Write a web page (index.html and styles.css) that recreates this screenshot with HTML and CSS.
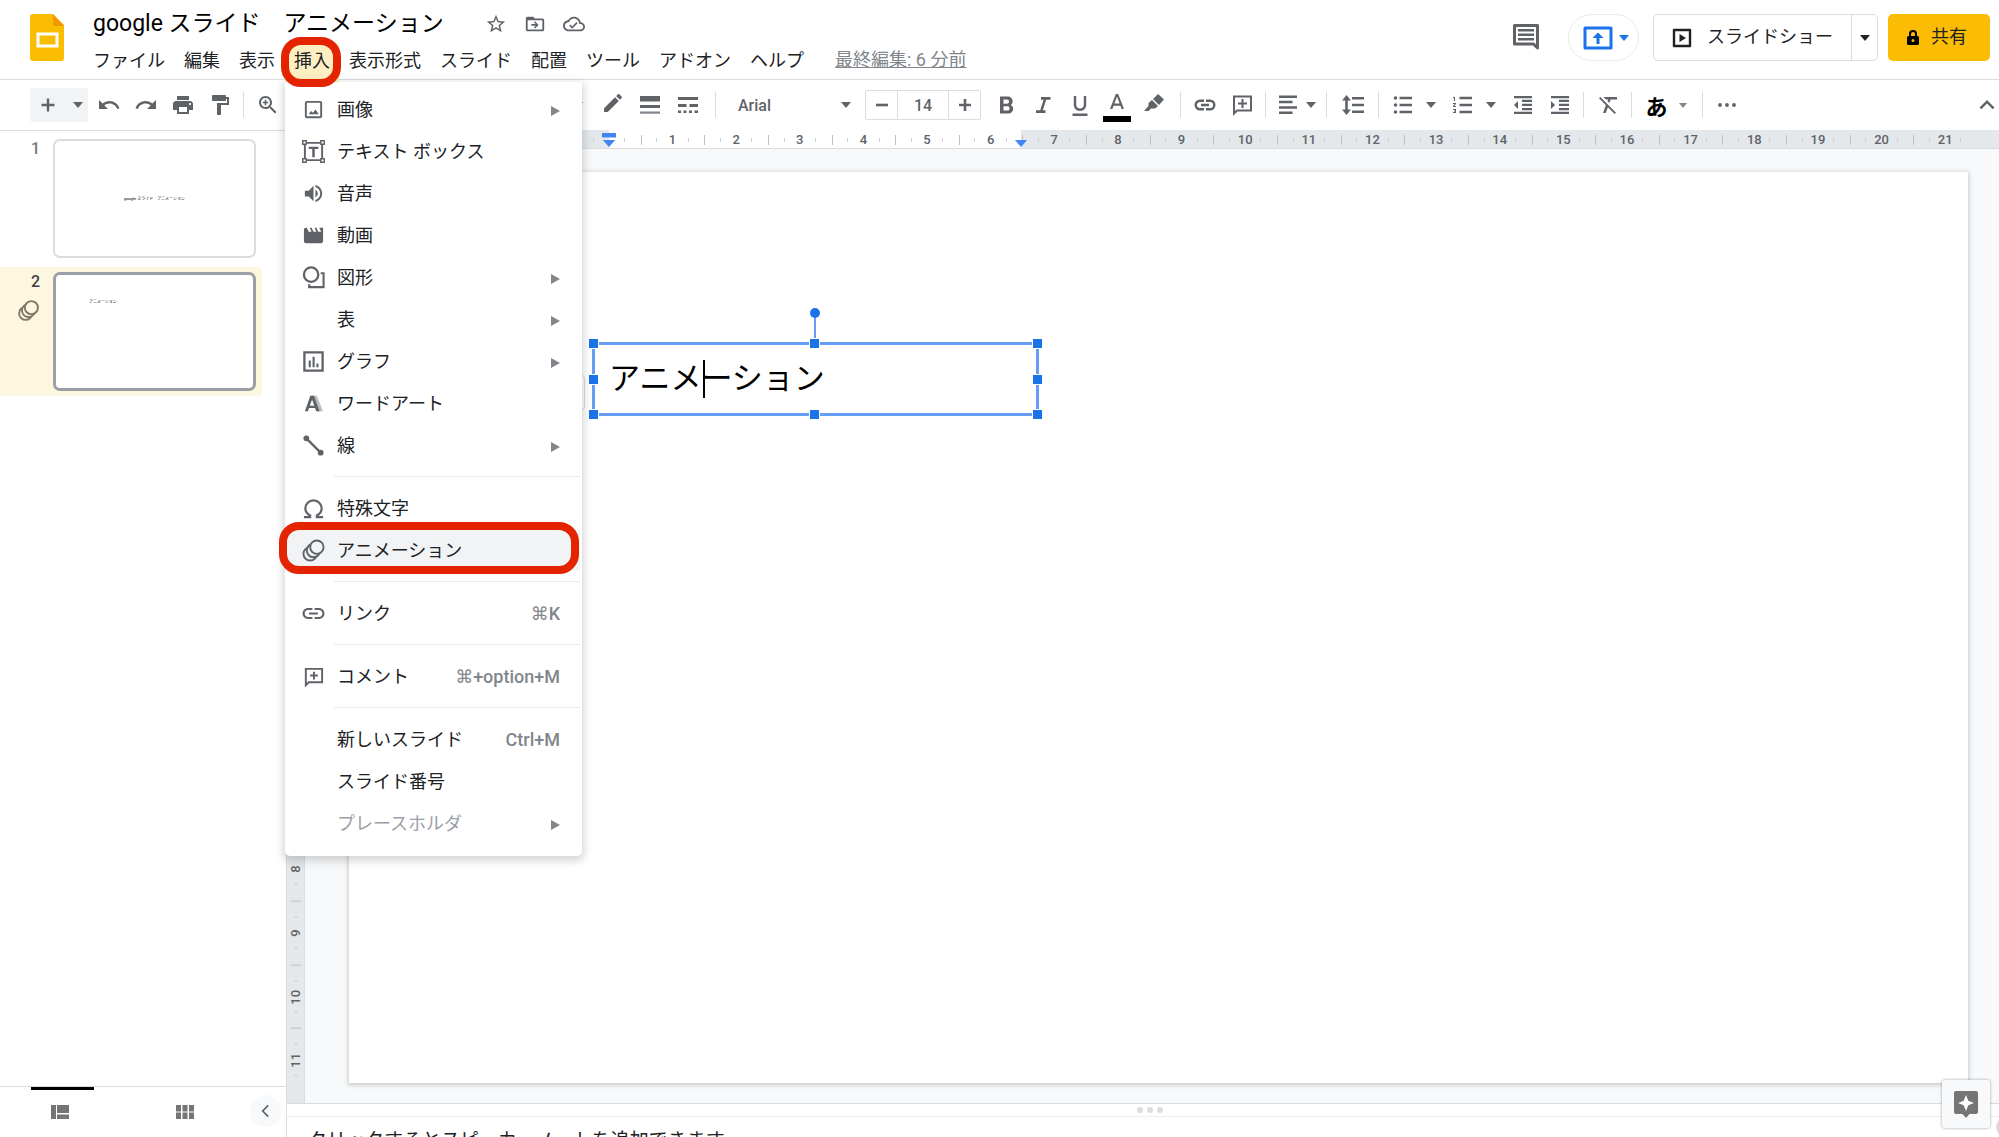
FILE: index.html
```html
<!DOCTYPE html>
<html lang="ja">
<head>
<meta charset="utf-8">
<title>google スライド　アニメーション</title>
<meta name="viewport" content="width=device-width, initial-scale=1">
<link rel="stylesheet" href="styles.css">
</head>
<body>
<div class="app">
  <header class="header">
    <svg class="logo" viewBox="0 0 34 47" aria-hidden="true"><path fill="#fbbc04" d="M3 0h20l11 11v33a3 3 0 0 1-3 3H3a3 3 0 0 1-3-3V3a3 3 0 0 1 3-3z"/><path fill="#f29900" d="M23 0l11 12H23z"/><path fill="none" stroke="#fff" stroke-width="3" d="M8 20h19v12H8z"/></svg>
    <div class="heading">
      <div class="title-row">
        <h1 class="title">google スライド　アニメーション</h1>
        <button class="title-icon" aria-label="スター"><svg viewBox="0 0 24 24"><path d="M22 9.24l-7.19-.62L12 2 9.19 8.63 2 9.24l5.46 4.73L5.82 21 12 17.27 18.18 21l-1.63-7.03L22 9.24zM12 15.4l-3.76 2.27 1-4.28-3.32-2.88 4.38-.38L12 6.1l1.71 4.04 4.38.38-3.32 2.88 1 4.28L12 15.4z"/></svg></button>
        <button class="title-icon" aria-label="移動"><svg viewBox="0 0 24 24"><path d="M20 6h-8l-2-2H4c-1.1 0-2 .9-2 2v12c0 1.1.9 2 2 2h16c1.1 0 2-.9 2-2V8c0-1.1-.9-2-2-2zm0 12H4V8h16v10zm-8-1l4-4-4-4-1.2 1.2 1.9 1.9H8v1.8h4.7l-1.9 1.9z"/></svg></button>
        <button class="title-icon" aria-label="ドキュメントのステータス"><svg viewBox="0 0 24 24"><path d="M19.35 10.04C18.67 6.59 15.64 4 12 4 9.11 4 6.6 5.64 5.35 8.04 2.34 8.36 0 10.91 0 14c0 3.31 2.69 6 6 6h13c2.76 0 5-2.24 5-5 0-2.64-2.05-4.78-4.65-4.96zM19 18H6c-2.21 0-4-1.79-4-4 0-2.05 1.53-3.76 3.56-3.97l1.07-.11.5-.95C8.08 7.14 9.94 6 12 6c2.62 0 4.88 1.86 5.39 4.43l.3 1.5 1.53.11C20.78 12.14 22 13.45 22 15c0 1.65-1.35 3-3 3zm-9-3.4L8 12.6l-1.3 1.3 3.3 3.3 6-6-1.3-1.3z"/></svg></button>
      </div>
      <nav class="menubar">
        <button>ファイル</button>
        <button>編集</button>
        <button>表示</button>
        <div class="menu-anchor">
          <button class="open" aria-expanded="true">挿入</button>
          <span class="callout callout-tab"></span>
          <div class="menu" role="menu">
            <button class="item"><svg viewBox="0 0 24 24"><path d="M19 5v14H5V5h14m0-2H5c-1.1 0-2 .9-2 2v14c0 1.100.9 2 2 2h14c1.100 0 2-.9 2-2V5c0-1.100-.9-2-2-2zM7 17l2.500-3.500 2 2 2.500-3.500 3.500 5z"/></svg><span>画像</span><i class="sub"></i></button>
            <button class="item"><svg viewBox="0 0 24 24"><path fill="none" stroke="#5f6368" stroke-width="2" d="M3 3h18v18H3z"/><path fill="#fff" stroke="#5f6368" stroke-width="1.500" d="M.8 .8h3.600v3.600H.8zM19.600.8h3.600v3.600h-3.600zM.8 19.600h3.600v3.600H.8zM19.600 19.600h3.600v3.600h-3.600z"/><path d="M7 7h10v2.500h-3.700V18h-2.600V9.500H7z"/></svg><span>テキスト ボックス</span></button>
            <button class="item"><svg viewBox="0 0 24 24"><path d="M3 9v6h4l5 5V4L7 9H3zm13.500 3c0-1.770-1.020-3.290-2.500-4.030v8.050c1.480-.73 2.500-2.250 2.500-4.020zM14 3.230v2.060c2.890.86 5 3.540 5 6.710s-2.110 5.850-5 6.710v2.060c4.010-.91 7-4.490 7-8.770s-2.990-7.860-7-8.770z"/></svg><span>音声</span></button>
            <button class="item"><svg viewBox="0 0 24 24"><path d="M18 4l2 4h-3l-2-4h-2l2 4h-3l-2-4H8l2 4H7L5 4H4c-1.100 0-1.990.9-1.990 2L2 18c0 1.100.9 2 2 2h16c1.100 0 2-.9 2-2V4h-4z"/></svg><span>動画</span></button>
            <button class="item"><svg viewBox="0 0 24 24"><path fill="none" stroke="#5f6368" stroke-width="2.200" d="M19.500 7.500H22.500V22H7.500v-3"/><circle cx="9.500" cy="9" r="7.500" fill="none" stroke="#5f6368" stroke-width="2.400"/></svg><span>図形</span><i class="sub"></i></button>
            <button class="item"><svg viewBox="0 0 24 24"></svg><span>表</span><i class="sub"></i></button>
            <button class="item"><svg viewBox="0 0 24 24"><path fill="none" stroke="#5f6368" stroke-width="2.400" d="M2.500 2.500h19v19h-19z"/><path d="M7 11h2.200v7H7zM11 7h2.200v11H11zM15 14h2.200v4H15z"/></svg><span>グラフ</span><i class="sub"></i></button>
            <button class="item"><svg viewBox="0 0 24 24"><path fill="#bdc1c6" d="M12 4h3.500L22 20h-6z"/><path fill="#9aa0a6" d="M10 4h3l6 16h-4z"/><path fill-rule="evenodd" d="M8.700 4h3.600L18 20h-3.200l-1.100-3.200H7.300L6.200 20H3zm1.800 3.700L8.200 14.300h4.600z"/></svg><span>ワードアート</span></button>
            <button class="item"><svg viewBox="0 0 24 24"><path stroke="#5f6368" stroke-width="2.400" d="M4.500 4.500l15 15"/><circle cx="4.500" cy="4.500" r="3"/><circle cx="19.500" cy="19.500" r="3"/></svg><span>線</span><i class="sub"></i></button>
            <hr>
            <button class="item"><svg viewBox="0 0 24 24"><path fill="none" stroke="#5f6368" stroke-width="2.300" d="M2 21h6.500v-1.800C5 17.500 3.500 15 3.500 12a8.500 8.500 0 0 1 17 0c0 3-1.500 5.500-5 7.200V21H22"/></svg><span>特殊文字</span></button>
            <div class="menu-anchor">
              <button class="item hover"><svg viewBox="0 0 24 24"><g fill="#f1f3f4" stroke="#5f6368" stroke-width="2"><circle cx="8.500" cy="15.500" r="7"/><circle cx="12" cy="12" r="7"/><circle cx="15.500" cy="8.500" r="7"/></g></svg><span>アニメーション</span></button>
              <span class="callout callout-row"></span>
            </div>
            <hr>
            <button class="item"><svg viewBox="1.500 1.500 21 21"><path d="M3.900 12c0-1.710 1.390-3.100 3.100-3.100h4V7H7c-2.760 0-5 2.240-5 5s2.240 5 5 5h4v-1.900H7c-1.710 0-3.100-1.390-3.100-3.100zM8 13h8v-2H8v2zm9-6h-4v1.900h4c1.710 0 3.100 1.390 3.100 3.100s-1.390 3.100-3.100 3.100h-4V17h4c2.760 0 5-2.240 5-5s-2.240-5-5-5z"/></svg><span>リンク</span><kbd>⌘K</kbd></button>
            <hr>
            <button class="item"><svg viewBox="0 0 24 24"><path fill="none" stroke="#5f6368" stroke-width="2" d="M4 4h17v14H7l-3 3z"/><path d="M11.500 7h2v3h3v2h-3v3h-2v-3h-3v-2h3z"/></svg><span>コメント</span><kbd>⌘+option+M</kbd></button>
            <hr>
            <button class="item"><svg viewBox="0 0 24 24"></svg><span>新しいスライド</span><kbd>Ctrl+M</kbd></button>
            <button class="item"><svg viewBox="0 0 24 24"></svg><span>スライド番号</span></button>
            <button class="item" disabled><svg viewBox="0 0 24 24"></svg><span>プレースホルダ</span><i class="sub"></i></button>
          </div>
        </div>
        <button>表示形式</button>
        <button>スライド</button>
        <button>配置</button>
        <button>ツール</button>
        <button>アドオン</button>
        <button>ヘルプ</button>
        <a class="last-edit" href="#">最終編集: 6 分前</a>
      </nav>
    </div>
    <div class="actions">
      <button class="comments" aria-label="コメント履歴"><svg viewBox="0 0 28 28"><path fill="none" stroke="#5f6368" stroke-width="3" stroke-linejoin="round" d="M2.500 2.500h23V25l-4-4h-19z"/><path d="M6 6h16v2.500H6zM6 10.500h16V13H6zM6 15h16v2.500H6z"/></svg></button>
      <button class="present" aria-label="会議で画面を共有"><svg viewBox="0 0 30 24"><path fill="none" stroke="#1a73e8" stroke-width="3" stroke-linejoin="round" d="M2 2h26v20H2z"/><path fill="#1a73e8" d="M15 6.500l5.500 5.500h-4v6h-3v-6h-4z"/></svg><i class="caret"></i></button>
      <div class="show">
        <button class="show-main"><svg viewBox="0 0 20 20"><path fill="none" stroke="#202124" stroke-width="2.400" stroke-linejoin="round" d="M2 2h16v16H2z"/><path fill="#202124" d="M7.500 6l6.500 4-6.500 4z"/></svg><span>スライドショー</span></button>
        <button class="show-more" aria-label="その他"><i class="caret"></i></button>
      </div>
      <button class="share"><svg viewBox="0 0 14 16"><path fill="#000" fill-rule="evenodd" d="M3 6V4a4 4 0 0 1 8 0v2h.5A1.500 1.500 0 0 1 13 7.500v6a1.500 1.500 0 0 1-1.500 1.500h-9A1.500 1.500 0 0 1 1 13.500v-6A1.500 1.500 0 0 1 2.500 6zm2 0h4V4a2 2 0 0 0-4 0zm2 3a1.500 1.500 0 1 0 0 3 1.500 1.500 0 0 0 0-3z"/></svg><span>共有</span></button>
    </div>
  </header>

  <div class="toolbar" role="toolbar">
    <button class="new" aria-label="新しいスライド"><svg viewBox="0 0 24 24"><path d="M18.500 13.200h-5.300v5.300h-2.400v-5.300H5.500v-2.400h5.300V5.500h2.400v5.300h5.300z"/></svg><i class="caret"></i></button>
    <button class="tool" aria-label="元に戻す"><svg viewBox="0 0 24 24"><path d="M12.500 8c-2.650 0-5.050.99-6.900 2.600L2 7v9h9l-3.620-3.620c1.390-1.160 3.160-1.880 5.120-1.880 3.540 0 6.550 2.310 7.600 5.500l2.370-.78C21.080 11.030 17.150 8 12.500 8z"/></svg></button>
    <button class="tool" aria-label="やり直し"><svg viewBox="0 0 24 24"><path d="M18.400 10.600C16.550 8.990 14.150 8 11.500 8c-4.650 0-8.580 3.030-9.960 7.220L3.900 16c1.050-3.190 4.050-5.500 7.600-5.500 1.950 0 3.730.72 5.120 1.880L13 16h9V7l-3.600 3.600z"/></svg></button>
    <button class="tool" aria-label="印刷"><svg viewBox="0 0 24 24"><path d="M19 8H5c-1.660 0-3 1.340-3 3v6h4v4h12v-4h4v-6c0-1.660-1.340-3-3-3zm-3 11H8v-5h8v5zm3-7c-.55 0-1-.45-1-1s.45-1 1-1 1 .45 1 1-.45 1-1 1zm-1-9H6v4h12V3z"/></svg></button>
    <button class="tool" aria-label="書式を貼り付け"><svg viewBox="0 0 24 24"><path d="M18 4V3c0-.55-.45-1-1-1H5c-.55 0-1 .45-1 1v4c0 .55.45 1 1 1h12c.55 0 1-.45 1-1V6h1v4H9v11c0 .55.45 1 1 1h2c.55 0 1-.45 1-1v-9h8V4h-3z"/></svg></button>
    <i class="divider"></i>
    <button class="tool" aria-label="ズーム"><svg viewBox="0 0 24 24"><path d="M15.500 14h-.79l-.28-.27C15.410 12.590 16 11.110 16 9.500 16 5.910 13.090 3 9.500 3S3 5.910 3 9.500 5.910 16 9.500 16c1.610 0 3.090-.59 4.230-1.570l.27.28v.79l5 4.990L20.490 19l-4.990-5zm-6 0C7.010 14 5 11.990 5 9.500S7.010 5 9.500 5 14 7.010 14 9.500 11.990 14 9.500 14zm.8-7.200H8.700v1.900H6.800v1.600h1.900v1.900h1.600v-1.900h1.900V8.700h-1.900z"/></svg></button>
    <button class="tool line-tool" aria-label="線"><i class="caret"></i></button>
    <button class="tool stroke" aria-label="枠線の色"><svg viewBox="0 0 24 24"><path d="M3 17.250V21h3.750L17.810 9.940l-3.750-3.750L3 17.250zM20.710 7.040c.39-.39.39-1.020 0-1.410l-2.340-2.340c-.39-.39-1.020-.39-1.410 0l-1.830 1.830 3.750 3.750 1.830-1.830z" transform="translate(1 -2)"/></svg></button>
    <button class="tool stroke" aria-label="枠線の太さ"><svg viewBox="0 0 24 24"><path d="M2 3h20v5.500H2zM2 12h20v3H2z"/><path fill="#80868b" d="M2 18.500h20v2.200H2z"/></svg></button>
    <button class="tool stroke" aria-label="枠線（破線）"><svg viewBox="0 0 24 24"><path d="M2 4h20v3H2zM2 11h8.500v3H2zM13.500 11H22v3h-8.500zM2 17.500h3V20H2zM7.500 17.500h3V20h-3zM13 17.500h3V20h-3zM18.500 17.500h3.500V20h-3.500z"/></svg></button>
    <i class="divider wide"></i>
    <button class="font">Arial<i class="caret"></i></button>
    <div class="size">
      <button aria-label="小さく"><svg viewBox="0 0 24 24"><path d="M6 10.700h12v2.600H6z"/></svg></button>
      <input type="text" value="14" aria-label="フォントサイズ">
      <button aria-label="大きく"><svg viewBox="0 0 24 24"><path d="M18 13.300h-4.700V18h-2.600v-4.700H6v-2.600h4.700V6h2.600v4.700H18z"/></svg></button>
    </div>
    <button class="tool" aria-label="太字"><svg viewBox="0 0 24 24"><path d="M16.800 12c1.100-.8 1.900-2.100 1.900-3.400 0-2.900-2.200-5-5.200-5H6v17h8.200c2.800 0 4.900-2.200 4.900-4.900 0-1.700-.9-3-2.300-3.700zM9.500 6.500h3.500c1.200 0 2.100.9 2.100 2.100s-.9 2.100-2.100 2.100H9.500zm4 11.100h-4v-4.300h4c1.200 0 2.100.9 2.100 2.100s-.9 2.200-2.100 2.200z"/></svg></button>
    <button class="tool" aria-label="斜体"><svg viewBox="0 0 24 24"><path d="M10 4v2.800h2.600L9.200 17.200H5V20h9.500v-2.800h-2.700l3.400-10.400h4.300V4z"/></svg></button>
    <button class="tool" aria-label="下線"><svg viewBox="0 0 24 24"><path d="M12 18c3.500 0 6.200-2.700 6.200-6.200V3h-2.400v8.800c0 2.200-1.600 3.800-3.800 3.800s-3.800-1.600-3.800-3.800V3H5.800v8.800c0 3.500 2.700 6.200 6.200 6.200zM4.500 20.500h15V23h-15z"/></svg></button>
    <button class="tool text-color" aria-label="テキストの色"><svg viewBox="0 0 24 24"><path fill-rule="evenodd" d="M10.800 1L5 16h2.400l1.200-3.300h6.800l1.200 3.300H19L13.200 1zM9.400 10.500L12 3.600l2.600 6.900z"/></svg></button>
    <button class="tool" aria-label="ハイライト"><svg viewBox="0 0 24 24"><path d="M16 1l6 5.500-5 5.500-6-6zM10 7l6 6-3 2.500h-4L6.500 18H2l4.500-5V10z"/></svg></button>
    <i class="divider after-format"></i>
    <button class="tool" aria-label="リンクを挿入"><svg viewBox="0 0 24 24"><path d="M3.900 12c0-1.710 1.390-3.100 3.100-3.100h4V6.500H7a5.500 5.500 0 0 0 0 11h4v-2.400H7c-1.710 0-3.100-1.390-3.100-3.100zM8 13.200h8v-2.400H8zm9-6.700h-4v2.400h4a3.100 3.100 0 0 1 0 6.200h-4v2.400h4a5.500 5.500 0 0 0 0-11z"/></svg></button>
    <button class="tool" aria-label="コメントを追加"><svg viewBox="0 0 24 24"><path fill="none" stroke="#5f6368" stroke-width="2" d="M4 3.500h17v14H7l-3 3z"/><path d="M11.500 6h2v3.500H17v2h-3.500V15h-2v-3.500H8v-2h3.500z"/></svg></button>
    <i class="divider"></i>
    <button class="split narrow" aria-label="配置"><svg viewBox="0 0 24 24"><path d="M3 2.500h18V5H3zM3 7.800h13.500v2.500H3zM3 13.200h18v2.500H3zM3 18.500h13.500V21H3z"/></svg><i class="caret"></i></button>
    <i class="divider"></i>
    <button class="tool spacing" aria-label="行間隔"><svg viewBox="0 0 24 24"><path d="M5.500 2L1 7.500h3.200v9H1L5.500 22 10 16.500H6.800v-9H10zM11 4h12v2.500H11zM11 10.800h12v2.500H11zM11 17.500h12V20H11z"/></svg></button>
    <i class="divider"></i>
    <button class="split" aria-label="箇条書き"><svg viewBox="0 0 24 24"><circle cx="4.500" cy="5" r="1.800"/><circle cx="4.500" cy="12" r="1.800"/><circle cx="4.500" cy="19" r="1.800"/><path d="M8.500 3.800h12.500v2.500H8.500zM8.500 10.800h12.500v2.500H8.500zM8.500 17.800h12.500v2.500H8.500z"/></svg><i class="caret"></i></button>
    <button class="split" aria-label="番号付きリスト"><svg viewBox="0 0 24 24"><path d="M2 17h2v.5H3v1h1v.5H2v1h3v-4H2v1zm1-9h1V4H2v1h1v3zm-1 3h1.800L2 13.100v.9h3v-1H3.200L5 10.900V10H2v1z"/><path d="M8.500 3.800h12.500v2.500H8.500zM8.500 10.800h12.500v2.500H8.500zM8.500 17.800h12.500v2.500H8.500z"/></svg><i class="caret"></i></button>
    <button class="tool" aria-label="インデント減"><svg viewBox="0 0 24 24"><path d="M11 17.200h10V15H11zM3 12l4 4V8zM3 21h18v-2.300H3zM3 3v2.300h18V3zm8 6h10V6.800H11zm0 4h10v-2.200H11z"/></svg></button>
    <button class="tool" aria-label="インデント増"><svg viewBox="0 0 24 24"><path d="M11 17.200h10V15H11zM3 8v8l4-4zM3 21h18v-2.300H3zM3 3v2.300h18V3zm8 6h10V6.800H11zm0 4h10v-2.200H11z"/></svg></button>
    <i class="divider"></i>
    <button class="tool" aria-label="書式をクリア"><svg viewBox="0 0 24 24"><path d="M4.300 4L3 5.300l6.900 6.900L7 20h2.700l2.200-5.800L18.700 21l1.300-1.300zM7.500 4l2.500 2.500h2.200l-.7 1.700 1.800 1.800 1.400-3.500H21V4z"/></svg></button>
    <i class="divider"></i>
    <button class="split ime" aria-label="入力ツール">あ<i class="caret small"></i></button>
    <i class="divider"></i>
    <button class="tool" aria-label="その他"><svg viewBox="0 0 24 24"><circle cx="5" cy="12" r="1.900"/><circle cx="12" cy="12" r="1.900"/><circle cx="19" cy="12" r="1.900"/></svg></button>
    <button class="collapse" aria-label="メニューを隠す"><svg viewBox="0 0 24 24"><path d="M12 7l-7.500 7.500 1.800 1.800 5.700-5.700 5.700 5.700 1.800-1.800z"/></svg></button>
  </div>

  <main class="main">
    <aside class="filmstrip">
      <div class="slides">
        <div class="slide-row">
          <div class="meta">1</div>
          <div class="thumb thumb-title">google スライド　アニメーション</div>
        </div>
        <div class="slide-row selected">
          <div class="meta">2<svg viewBox="0 0 24 24"><g fill="#fef7e0" stroke="#80786a" stroke-width="2"><circle cx="9" cy="15" r="6.800"/><circle cx="12" cy="12" r="6.800"/><circle cx="15" cy="9" r="6.800"/></g></svg></div>
          <div class="thumb thumb-body">アニメーション</div>
        </div>
      </div>
      <div class="views">
        <button class="view active" aria-label="フィルムストリップ表示"><svg viewBox="0 0 18 14"><path d="M0 0h5v14H0zM6 0h12v8H6zM6 9.500h12V14H6z"/></svg></button>
        <button class="view" aria-label="グリッド表示"><svg viewBox="0 0 18 14"><path d="M0 0h5v6.400H0zM6.500 0h5v6.400h-5zM13 0h5v6.400h-5zM0 7.600h5V14H0zM6.500 7.600h5V14h-5zM13 7.600h5V14h-5z"/></svg></button>
        <button class="hide" aria-label="フィルムストリップを隠す"><svg viewBox="0 0 24 24"><path d="M15.400 6L14 4.600 6.600 12l7.400 7.400 1.400-1.400-6-6z"/></svg></button>
      </div>
    </aside>

    <section class="workspace">
      <div class="ruler-x">
        <span class="ruler-active"></span>
        <div class="cells">
          <span class="origin"></span><span>1</span><span>2</span><span>3</span><span>4</span><span>5</span><span>6</span><span>7</span><span>8</span><span>9</span><span>10</span><span>11</span><span>12</span><span>13</span><span>14</span><span>15</span><span>16</span><span>17</span><span>18</span><span>19</span><span>20</span><span>21</span>
        </div>
        <svg class="marker marker-left" viewBox="0 0 16 16"><path fill="#4285f4" d="M0 0h16v5H0zM1 8h14l-7 8z"/></svg>
        <svg class="marker marker-right" viewBox="0 0 16 16"><path fill="#4285f4" d="M1 8h14l-7 8z"/></svg>
      </div>
      <div class="stage">
        <div class="ruler-y">
          <div class="cells">
            <span></span><span>1</span><span>2</span><span>3</span><span>4</span><span>5</span><span>6</span><span>7</span><span>8</span><span>9</span><span>10</span><span>11</span>
          </div>
        </div>
        <div class="canvas">
          <div class="slide">
            <span class="autofit"></span>
            <div class="textbox">
              <p>アニメ<i class="cursor"></i>ーション</p>
              <span class="stem"></span><span class="rotate"></span>
              <b class="h nw"></b><b class="h n"></b><b class="h ne"></b><b class="h w"></b><b class="h e"></b><b class="h sw"></b><b class="h s"></b><b class="h se"></b>
            </div>
          </div>
        </div>
      </div>
      <div class="splitter"><i></i><i></i><i></i></div>
      <div class="notes">クリックするとスピーカーノートを追加できます</div>
    </section>
  </main>

  <button class="explore" aria-label="データ探索"><svg viewBox="0 0 24 28"><path fill="#757575" d="M2 1h20a2 2 0 0 1 2 2v19a2 2 0 0 1-2 2h-6.500L12 28l-3.500-4H2a2 2 0 0 1-2-2V3a2 2 0 0 1 2-2z"/><path fill="#fff" d="M12 5l2.300 5.700L20 13l-5.700 2.300L12 21l-2.300-5.700L4 13l5.700-2.300z"/></svg></button>
  <span class="edge-tab"></span>
</div>
</body>
</html>
```

FILE: styles.css
```css
* { box-sizing: border-box; }
body {
  margin: 0;
  background: #fff;
  color: #202124;
  font-family: Roboto, "Noto Sans CJK JP", sans-serif;
  font-size: 18px;
}
button {
  display: flex;
  align-items: center;
  justify-content: center;
  padding: 0;
  border: 0;
  background: none;
  color: inherit;
  font: inherit;
  white-space: nowrap;
}
svg { display: block; flex: none; width: 24px; height: 24px; fill: #5f6368; }
.app { position: relative; display: flex; flex-direction: column; height: 100vh; overflow: hidden; }
.caret { flex: none; border: 5px solid transparent; border-top: 6px solid #5f6368; border-bottom: 0; }
.caret.small { border-width: 4px; border-top-width: 5px; border-top-color: #80868b; border-bottom: 0; }

/* Header */
.header { display: flex; height: 80px; padding: 0 9px 0 30px; border-bottom: 1px solid #dadce0; }
.logo { width: 34px; height: 47px; margin: 14px 29px 0 0; }
.heading { flex: 1; padding-top: 4px; }
.title-row { display: flex; align-items: center; height: 39px; }
.title { margin: 0 33px 0 0; font-size: 23px; font-weight: 400; line-height: 38px; color: #000; white-space: nowrap; }
.title-icon { width: 39px; height: 38px; }
.title-icon svg { width: 22px; height: 22px; }
.menubar { display: flex; align-items: center; gap: 19px; height: 36px; }
.menubar > button, .menubar .open { line-height: 36px; }
.last-edit { margin-left: 12px; padding-bottom: 2px; color: #80868b; line-height: 32px; white-space: nowrap; }
.menu-anchor { position: relative; }
.open::before { content: ""; position: absolute; z-index: -1; inset: 0 -9px -3px -9px; background: #feefc3; }
.menubar > .menu-anchor { z-index: 5; }
.callout { position: absolute; z-index: 2; border: 8px solid #e42300; border-radius: 20px; pointer-events: none; }
.callout-tab { inset: -6px -11px -8px -13px; }
.callout-row { inset: -7px 3px -3px -6px; }

.actions { display: flex; align-items: flex-start; padding-top: 14px; }
.comments { width: 36px; height: 46px; margin-right: 24px; }
.comments svg { width: 28px; height: 28px; }
.present { gap: 6px; width: 71px; height: 47px; margin-right: 14px; padding-left: 4px; border: 1px solid #e8eaed; border-radius: 24px; }
.present svg { width: 30px; height: 24px; }
.present .caret { border-top-color: #1a73e8; }
.show { display: flex; width: 225px; height: 47px; margin-right: 10px; border: 1px solid #dadce0; border-radius: 5px; }
.show-main { flex: 1; gap: 15px; border-right: 1px solid #dadce0; }
.show-main span, .share span { padding-bottom: 5px; }
.show-main svg { width: 20px; height: 20px; }
.show-more { width: 25px; }
.show-more .caret { border-top-color: #202124; }
.share { gap: 11px; width: 102px; height: 47px; padding-right: 5px; border-radius: 5px; background: #fbbc04; }
.share svg { width: 14px; height: 16px; }

/* Insert menu */
.menu {
  position: absolute;
  top: 39px;
  left: -9px;
  width: 297px;
  padding: 6px 0 12px;
  border-radius: 0 0 5px 5px;
  background: #fff;
  box-shadow: 0 3px 8px 2px rgba(60, 64, 67, .22);
}
.item { width: 295px; height: 42px; padding: 0 20px 0 17px; justify-content: flex-start; color: #202124; }
.item svg { width: 23px; height: 23px; margin-right: 12px; }
.item span { padding-bottom: 2px; }
.item.hover { background: #f1f3f4; }
.item:disabled { color: #9aa0a6; }
.item kbd { margin-left: auto; font: 500 18px Roboto, "DejaVu Sans", sans-serif; color: #80868b; }
.sub { margin: 3px 0 0 auto; border: 5px solid transparent; border-left: 9px solid #80868b; border-right: 0; }
.menu hr { height: 1px; margin: 10px 2px 10px 49px; border: 0; background: #e8eaed; }

/* Toolbar */
.toolbar { display: flex; flex: none; align-items: center; height: 50px; padding-left: 30px; }
.new { gap: 13px; width: 58px; height: 34px; margin-right: 2px; background: #f1f3f4; border-radius: 3px; }
.tool { flex: none; width: 37px; height: 37px; }
.stroke { width: 38px; }
.line-tool { width: 307px; justify-content: flex-end; padding-right: 10px; }
.divider { flex: none; width: 1px; height: 26px; margin: 0 5px; background: #dadce0; }
.divider.wide { margin: 0 8px; }
.divider.after-format { margin-left: 8px; }
.font { flex: none; justify-content: space-between; width: 141px; padding: 0 14px; font-size: 16px; font-weight: 500; color: #5f6368; }
.size { display: flex; flex: none; width: 116px; height: 30px; margin-right: 6px; border: 1px solid #dadce0; border-radius: 2px; }
.size button { width: 31px; }
.size input {
  flex: 1;
  min-width: 0;
  padding: 0;
  border: solid #dadce0;
  border-width: 0 1px;
  background: none;
  font: 500 16px Roboto, sans-serif;
  color: #5f6368;
  text-align: center;
}
.text-color { background: linear-gradient(#000, #000) center bottom 2px / 28px 6px no-repeat; }
.split { flex: none; gap: 11px; width: 58px; height: 37px; margin-right: 2px; }
.split.narrow { gap: 6px; width: 50px; margin-right: 0; }
.spacing { width: 41px; }
.ime { font-size: 22px; font-weight: 700; color: #000; }
.collapse { width: 24px; height: 37px; margin-left: auto; }

/* Filmstrip */
.main { display: flex; flex: 1; min-height: 0; }
.filmstrip { display: flex; flex: none; flex-direction: column; width: 287px; border-top: 1px solid #dadce0; border-right: 1px solid #dadce0; }
.slides { flex: 1; padding-top: 4px; }
.slide-row { display: flex; gap: 13px; width: 262px; height: 129px; margin-bottom: 3px; padding-top: 4px; border-radius: 0 4px 4px 0; }
.slide-row.selected { padding-top: 5px; background: #fef7e0; }
.meta { display: flex; flex-direction: column; align-items: flex-end; gap: 7px; width: 40px; font-size: 16px; font-weight: 500; line-height: 20px; color: #757575; }
.meta svg { width: 23px; height: 23px; }
.selected .meta { color: #3c4043; }
.thumb { width: 203px; height: 119px; border: 2px solid #dadce0; border-radius: 7px; background: #fff; font-size: 4px; line-height: 6px; color: #000; }
.selected .thumb { border: 3px solid #9aa0a6; }
.thumb-title { padding-top: 55px; text-align: center; }
.thumb-body { padding: 24px 0 0 33px; }
.views { position: relative; display: flex; height: 51px; padding: 0 4px 0 13px; border-top: 1px solid #dadce0; }
.view { width: 98px; height: 50px; }
.view + .view { margin-left: 25px; }
.view svg { width: 18px; height: 14px; fill: #757575; }
.view.active { padding-right: 4px; background: linear-gradient(#000, #000) center top / 63px 3px no-repeat; }
.hide { width: 32px; height: 32px; margin: 8px 0 0 auto; border-radius: 50%; background: #f8f9fa; }
.hide svg { width: 20px; height: 20px; }

/* Rulers */
.workspace { display: flex; flex: 1; flex-direction: column; min-width: 0; }
.ruler-x { position: relative; flex: none; height: 19px; padding: 0 22px 0 290px; border-bottom: 1px solid #dadce0; background: #e4e8eb; }
.cells { position: relative; display: grid; color: #5f6368; font-size: 13px; font-weight: 500; line-height: 18px; text-align: center; }
.ruler-x .cells { grid-template-columns: repeat(22, 1fr); height: 18px; line-height: 20px; }
.ruler-x .cells span {
  background:
    linear-gradient(#bdc1c6, #bdc1c6) 0 50% / 1px 10px no-repeat,
    linear-gradient(#cdd1d5, #cdd1d5) 25% 50% / 1px 4px no-repeat,
    linear-gradient(#cdd1d5, #cdd1d5) 75% 50% / 1px 4px no-repeat;
}
.ruler-active { position: absolute; left: 322px; width: 412px; height: 18px; background: #fff; }
.marker { position: absolute; top: 3px; width: 16px; height: 14px; }
.marker-left { left: 314px; }
.marker-right { left: 726px; }
.stage { display: flex; flex: 1; min-height: 0; border-bottom: 1px solid #dadce0; }
.ruler-y { flex: none; width: 18px; padding: 179px 0 11px; border-right: 1px solid #dadce0; background: #e4e8eb; }
.ruler-y .cells { grid-template-rows: repeat(12, 1fr); height: 100%; }
.ruler-y .cells span {
  writing-mode: vertical-rl;
  rotate: 180deg;
  background:
    linear-gradient(#bdc1c6, #bdc1c6) 50% 100% / 10px 1px no-repeat,
    linear-gradient(#cdd1d5, #cdd1d5) 50% 25% / 4px 1px no-repeat,
    linear-gradient(#cdd1d5, #cdd1d5) 50% 75% / 4px 1px no-repeat;
}

/* Canvas */
.canvas { display: flex; flex: 1; padding: 23px 31px 20px 44px; background: #f8f9fa; }
.slide { position: relative; flex: 1; background: #fff; box-shadow: 0 1px 4px 1px rgba(60, 64, 67, .25); }
.textbox { position: absolute; top: 170px; left: 243px; width: 447px; height: 74px; border: 3px solid #669df6; }
.textbox p { margin: 0; padding-left: 14px; font-size: 31px; line-height: 68px; color: #000; white-space: nowrap; }
.cursor { position: absolute; top: 15px; left: 108px; width: 2px; height: 38px; background: #000; }
.h { position: absolute; width: 11px; height: 11px; border: 1px solid #fff; background: #1a73e8; }
.nw, .n, .ne { top: -7px; }
.w, .e { top: calc(50% - 5px); }
.sw, .s, .se { bottom: -7px; }
.nw, .w, .sw { left: -7px; }
.n, .s { left: calc(50% - 7px); }
.ne, .e, .se { right: -7px; }
.stem { position: absolute; top: -28px; left: calc(50% - 2px); width: 2px; height: 24px; background: #669df6; }
.rotate { position: absolute; top: -37px; left: calc(50% - 6px); width: 10px; height: 10px; border-radius: 50%; background: #1a73e8; }
.autofit { position: absolute; top: 202px; left: 200px; width: 36px; height: 37px; border: 1px solid #dadce0; border-radius: 5px; }

/* Speaker notes */
.splitter { display: flex; flex: none; align-items: center; justify-content: center; gap: 4px; height: 13px; border-bottom: 1px solid #eceef0; padding-left: 13px; }
.splitter i { width: 6px; height: 6px; border-radius: 50%; background: #dadce0; }
.notes { flex: none; height: 20px; padding: 10px 0 0 21px; overflow: hidden; font-size: 19px; line-height: 28px; white-space: nowrap; }

/* Floating corner */
.explore { position: absolute; right: 9px; bottom: 9px; width: 48px; height: 48px; border-radius: 3px; background: #f8f9fa; box-shadow: 0 0 3px rgba(60, 64, 67, .5); }
.explore svg { width: 24px; height: 28px; }
.edge-tab { position: absolute; right: -17px; bottom: 0; width: 20px; height: 20px; border-radius: 50%; background: #dadce0; }
```
